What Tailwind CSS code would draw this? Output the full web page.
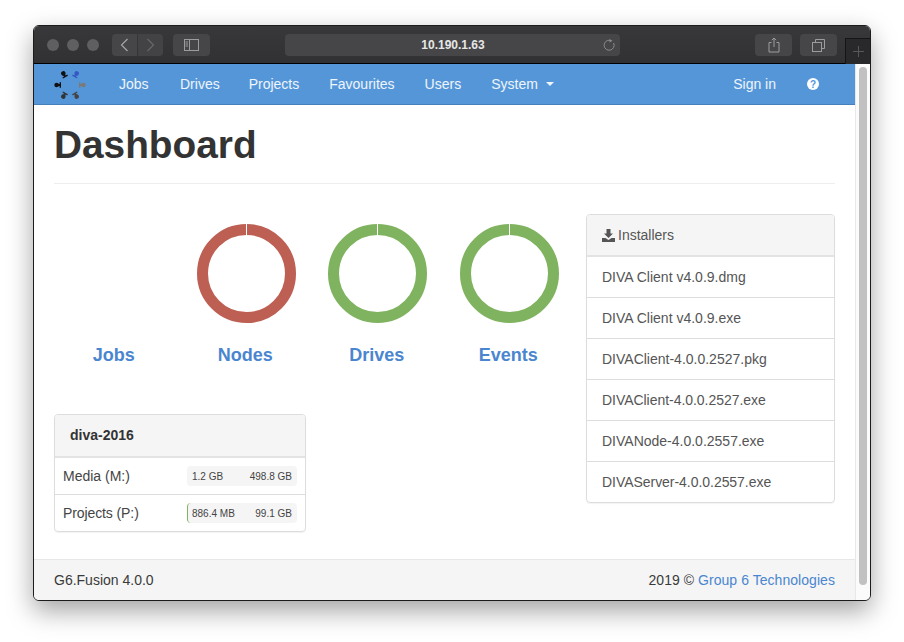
<!DOCTYPE html>
<html><head><meta charset="utf-8"><script src="https://cdn.jsdelivr.net/npm/@tailwindcss/browser@4"></script></head>
<body class="bg-white font-['Liberation_Sans',Arial,sans-serif] text-[14px] text-[#3a3a3a] overflow-hidden">
<div class="w-[904px] h-[642px] pt-[25px] pl-[33px]">
<div class="w-[838px] h-[576px] flex flex-col rounded-[6px] border border-[#1c1c1c] overflow-hidden shadow-[0_10px_26px_rgba(0,0,0,0.36)] bg-white">
  <!-- title bar -->
  <div class="h-[38px] shrink-0 flex items-start pt-[8px] bg-gradient-to-b from-[#38383a] to-[#313133] border-b border-black relative">
    <div class="flex gap-[8px] ml-[13px] mt-[5px]"><span class="w-[12px] h-[12px] rounded-full bg-[#5f5f61]"></span><span class="w-[12px] h-[12px] rounded-full bg-[#5f5f61]"></span><span class="w-[12px] h-[12px] rounded-full bg-[#5f5f61]"></span></div>
    <div class="flex gap-px ml-[13px]">
      <div class="w-[25px] h-[22px] rounded-l-[4px] bg-[#464648] flex items-center justify-center"><svg width="9" height="14" viewBox="0 0 9 14" fill="none" stroke="#a5a5a7" stroke-width="1.2"><path d="M7.5 1 1.5 7l6 6"/></svg></div>
      <div class="w-[25px] h-[22px] rounded-r-[4px] bg-[#434345] flex items-center justify-center"><svg width="9" height="14" viewBox="0 0 9 14" fill="none" stroke="#68686a" stroke-width="1.2"><path d="M1.5 1l6 6-6 6"/></svg></div>
    </div>
    <div class="w-[37px] h-[22px] ml-[10px] rounded-[4px] bg-[#464648] flex items-center justify-center"><svg width="15" height="12" viewBox="0 0 15 12" fill="none" stroke="#9c9c9e"><rect x=".5" y=".5" width="14" height="11"/><path d="M5.5 .5v11M1.5 3h2.5M1.5 5h2.5M1.5 7h2.5"/></svg></div>
    <div class="w-[335px] h-[22px] ml-[75px] rounded-[4px] bg-[#464648] relative flex items-center justify-center text-[12px] font-bold text-[#e6e6e6]"><span class="ml-[1px]">10.190.1.63</span>
      <svg class="absolute right-[5px] top-[5px]" width="12" height="12" viewBox="0 0 12 12" fill="none" stroke="#8a8a8c"><path d="M7 1.3A5 5 0 1 0 10.6 4"/><path d="M6.5 0 9.5 1.7 6.5 3.4z" fill="#8a8a8c" stroke="none"/></svg>
    </div>
    <div class="w-[37px] h-[22px] ml-[135px] rounded-[4px] bg-[#464648] flex items-center justify-center"><svg width="12" height="16" viewBox="0 0 12 16" fill="none" stroke="#9c9c9e"><path d="M3.5 5.5H1v9.5h10V5.5H8.5M6 10V1M3.8 3.2 6 1l2.2 2.2"/></svg></div>
    <div class="w-[37px] h-[22px] ml-[8px] rounded-[4px] bg-[#464648] flex items-center justify-center"><svg width="13" height="13" viewBox="0 0 13 13" fill="none" stroke="#9c9c9e"><rect x=".5" y="3.5" width="9" height="9"/><path d="M3.5 3.5v-3h9v9h-3"/></svg></div>
    <div class="w-[25px] h-[26px] ml-[8px] mt-[4px] bg-[#29292b] border-l border-t border-[#151515] flex items-center justify-center"><svg width="11" height="11" viewBox="0 0 11 11" stroke="#58585a"><path d="M5.5 0v11M0 5.5h11"/></svg></div>
  </div>
  <div class="flex-1 flex min-h-0">
    <div class="w-[821px] flex flex-col">
      <!-- navbar -->
      <nav class="h-[41px] shrink-0 bg-[#5596d8] border-b border-[#4680bb] flex items-center pl-[20px] pr-[36px] text-white/90">
        <svg class="w-[32px] h-[32px] shrink-0 mt-[1px]" viewBox="-16 -16 32 32">
          <g transform="rotate(-30) translate(0 -12)" fill="#111"><circle cy="-1.4" r="2.3"/><path d="M-1-1h2V2.4h-2z"/><path d="M-2.8 1.6h5.6v1.4h-5.6z"/></g>
          <g transform="rotate(30) translate(0 -12)" fill="#3558c4"><circle cy="-1.4" r="2.3"/><path d="M-1-1h2V2.4h-2z"/><path d="M-2.8 1.6h5.6v1.4h-5.6z"/></g>
          <g transform="rotate(90) translate(0 -12)" fill="#7a7a7a"><circle cy="-1.4" r="2.3"/><path d="M-1-1h2V2.4h-2z"/><path d="M-2.8 1.6h5.6v1.4h-5.6z"/></g>
          <g transform="rotate(150) translate(0 -12)" fill="#444"><circle cy="-1.4" r="2.3"/><path d="M-1-1h2V2.4h-2z"/><path d="M-2.8 1.6h5.6v1.4h-5.6z"/></g>
          <g transform="rotate(210) translate(0 -12)" fill="#333"><circle cy="-1.4" r="2.3"/><path d="M-1-1h2V2.4h-2z"/><path d="M-2.8 1.6h5.6v1.4h-5.6z"/></g>
          <g transform="rotate(270) translate(0 -12)" fill="#111"><circle cy="-1.4" r="2.3"/><path d="M-1-1h2V2.4h-2z"/><path d="M-2.8 1.6h5.6v1.4h-5.6z"/></g>
        </svg>
        <div class="flex gap-[30px] ml-[33px]"><span class="w-[31px]">Jobs</span><span class="-mr-[1px]">Drives</span><span>Projects</span><span>Favourites</span><span>Users</span><span class="flex items-center gap-[8px]">System <span class="w-0 h-0 border-x-[4px] border-x-transparent border-t-[4px] border-t-white/90"></span></span></div>
        <span class="ml-auto">Sign in</span>
        <span class="ml-[31px] w-[12px] h-[12px] rounded-full bg-white text-[#5596d8] text-[10px] font-bold flex items-center justify-center">?</span>
      </nav>
      <!-- main -->
      <main class="flex-1 px-[20px] min-h-0">
        <h1 class="h-[79px] pt-[17px] border-b border-[#eee] text-[38.8px] leading-[46px] font-bold text-[#333]">Dashboard</h1>
        <div class="flex pt-[30px] justify-between">
          <div class="w-[520px]">
            <div class="grid grid-cols-4 w-[526px] -ml-[5px]">
              <div class="flex flex-col items-center h-[200px] pt-[10px]"><div class="h-[99px]"></div><div class="mt-[22px] mr-[2px] text-[18px] leading-[20px] font-bold text-[#4a86cf]">Jobs</div></div>
              <div class="flex flex-col items-center h-[200px] pt-[10px]"><svg class="w-[99px] h-[99px]" viewBox="0 0 99 99"><circle cx="49.5" cy="49.5" r="44" fill="none" stroke="#bd5f52" stroke-width="11"/><path d="M49.5 0v11" stroke="#fff"/></svg><div class="mt-[22px] mr-[2px] text-[18px] leading-[20px] font-bold text-[#4a86cf]">Nodes</div></div>
              <div class="flex flex-col items-center h-[200px] pt-[10px]"><svg class="w-[99px] h-[99px]" viewBox="0 0 99 99"><circle cx="49.5" cy="49.5" r="44" fill="none" stroke="#7fb35f" stroke-width="11"/><path d="M49.5 0v11" stroke="#fff"/></svg><div class="mt-[22px] mr-[2px] text-[18px] leading-[20px] font-bold text-[#4a86cf]">Drives</div></div>
              <div class="flex flex-col items-center h-[200px] pt-[10px]"><svg class="w-[99px] h-[99px]" viewBox="0 0 99 99"><circle cx="49.5" cy="49.5" r="44" fill="none" stroke="#7fb35f" stroke-width="11"/><path d="M49.5 0v11" stroke="#fff"/></svg><div class="mt-[22px] mr-[2px] text-[18px] leading-[20px] font-bold text-[#4a86cf]">Events</div></div>
            </div>
            <div class="w-[252px] h-[118px] border border-[#ddd] rounded-[4px] overflow-hidden shadow-[0_1px_1px_rgba(0,0,0,0.05)]">
              <div class="h-[43px] bg-[#f5f5f5] border-b-2 border-[#e3e3e3] pl-[15px] flex items-center font-bold text-[#333]">diva-2016</div>
              <div class="h-[37px] border-b border-[#ddd] flex items-center justify-between pl-[8px] pr-[8px] text-[#444]"><span>Media (M:)</span><div class="w-[110px] h-[20px] rounded-[4px] bg-[#f5f5f5] flex items-center justify-between px-[5px] text-[10px]"><span>1.2 GB</span><span>498.8 GB</span></div></div>
              <div class="h-[36px] flex items-center justify-between pl-[8px] pr-[8px] text-[#444]"><span class="tracking-[-0.1px]">Projects (P:)</span><div class="w-[110px] h-[20px] rounded-[4px] bg-[#f5f5f5] border-l border-[#7fb35f] flex items-center justify-between pl-[4px] pr-[5px] text-[10px]"><span>886.4 MB</span><span>99.1 GB</span></div></div>
            </div>
          </div>
          <div class="w-[249px] h-[289px] border border-[#ddd] rounded-[4px] overflow-hidden shadow-[0_1px_1px_rgba(0,0,0,0.05)] text-[#555]">
            <div class="h-[42px] bg-[#f5f5f5] border-b-2 border-[#e3e3e3] pl-[15px] flex items-center gap-[3px]"><svg width="13" height="13" viewBox="0 0 13 13" fill="#555"><path d="M4.5 0h4v4.5H11L6.5 9 2 4.5h2.5z"/><path d="M0 9h3.5l3 2 3-2H13v4H0z"/></svg>Installers</div>
            <div class="h-[41px] border-b border-[#ddd] pl-[15px] flex items-center">DIVA Client v4.0.9.dmg</div>
            <div class="h-[41px] border-b border-[#ddd] pl-[15px] flex items-center">DIVA Client v4.0.9.exe</div>
            <div class="h-[41px] border-b border-[#ddd] pl-[15px] flex items-center">DIVAClient-4.0.0.2527.pkg</div>
            <div class="h-[41px] border-b border-[#ddd] pl-[15px] flex items-center tracking-[-0.04px]">DIVAClient-4.0.0.2527.exe</div>
            <div class="h-[41px] border-b border-[#ddd] pl-[15px] flex items-center">DIVANode-4.0.0.2557.exe</div>
            <div class="h-[41px] pl-[15px] flex items-center tracking-[-0.04px]">DIVAServer-4.0.0.2557.exe</div>
          </div>
        </div>
      </main>
      <footer class="h-[41px] shrink-0 bg-[#f5f5f5] border-t border-[#e7e7e7] px-[20px] flex items-center justify-between"><span>G6.Fusion 4.0.0</span><span class="tracking-[0.05px]">2019 © <span class="text-[#4a86cf]">Group 6 Technologies</span></span></footer>
    </div>
    <div class="flex-1 bg-[#fbfbfb] border-l border-[#e8e8e8] pl-[3px] pt-[3px]"><div class="w-[8px] h-[518px] rounded-full bg-[#c1c1c1]"></div></div>
  </div>
</div>
</div>
</body></html>
